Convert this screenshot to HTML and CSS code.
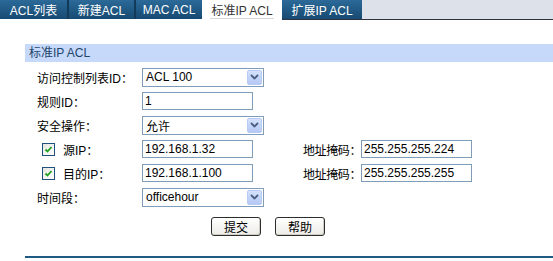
FILE: index.html
```html
<!DOCTYPE html>
<html lang="zh-CN">
<head>
  <meta charset="UTF-8">
  <title>标准IP ACL</title>
  <link rel="stylesheet" href="styles.css">
</head>
<body>
<div class="tabs">
  <a class="tab t1">ACL列表</a>
  <a class="tab t2">新建ACL</a>
  <a class="tab t3">MAC ACL</a>
  <a class="tab active"><span>标准IP ACL</span></a>
  <a class="tab t5">扩展IP ACL</a>
  <div class="tabs-rest"></div>
</div>

<div class="panel">
  <div class="panel-title">标准IP ACL</div>
  <div class="form">
    <div class="row">
      <label class="lbl">访问控制列表ID：</label>
      <div class="cell">
        <div class="select"><span>ACL 100</span><i class="drop"><svg width="9" height="6" viewBox="0 0 9 6"><path d="M1 1 L4.5 4.5 L8 1" fill="none" stroke="#4a5f86" stroke-width="1.8"/></svg></i></div>
      </div>
    </div>
    <div class="row">
      <label class="lbl">规则ID：</label>
      <div class="cell"><div class="input">1</div></div>
    </div>
    <div class="row">
      <label class="lbl">安全操作：</label>
      <div class="cell">
        <div class="select"><span>允许</span><i class="drop"><svg width="9" height="6" viewBox="0 0 9 6"><path d="M1 1 L4.5 4.5 L8 1" fill="none" stroke="#4a5f86" stroke-width="1.8"/></svg></i></div>
      </div>
    </div>
    <div class="row">
      <label class="lbl chk-lbl">
        <i class="chk"><svg width="11" height="11" viewBox="0 0 11 11"><path d="M2.5 5.5 L4.5 7.5 L8.5 3" fill="none" stroke="#21a121" stroke-width="1.8"/></svg></i>源IP：
      </label>
      <div class="cell"><div class="input">192.168.1.32</div></div>
      <label class="lbl2">地址掩码：</label>
      <div class="input">255.255.255.224</div>
    </div>
    <div class="row">
      <label class="lbl chk-lbl">
        <i class="chk"><svg width="11" height="11" viewBox="0 0 11 11"><path d="M2.5 5.5 L4.5 7.5 L8.5 3" fill="none" stroke="#21a121" stroke-width="1.8"/></svg></i>目的IP：
      </label>
      <div class="cell"><div class="input">192.168.1.100</div></div>
      <label class="lbl2">地址掩码：</label>
      <div class="input">255.255.255.255</div>
    </div>
    <div class="row">
      <label class="lbl">时间段：</label>
      <div class="cell">
        <div class="select"><span>officehour</span><i class="drop"><svg width="9" height="6" viewBox="0 0 9 6"><path d="M1 1 L4.5 4.5 L8 1" fill="none" stroke="#4a5f86" stroke-width="1.8"/></svg></i></div>
      </div>
    </div>
  </div>
  <div class="buttons">
    <button class="btn">提交</button>
    <button class="btn">帮助</button>
  </div>
  <div class="bottom-line"></div>
</div>
</body>
</html>
```

FILE: styles.css
```css
* {
  margin: 0;
  padding: 0;
  box-sizing: border-box;
}
body {
  background-color: #fff;
  font-family: "Liberation Sans", "Noto Sans CJK SC", sans-serif;
  font-size: 12px;
  color: #000;
}

/* 顶部标签 */
.tabs {
  display: flex;
  height: 20px;
}
.tab {
  display: flex;
  align-items: center;
  justify-content: center;
  height: 19px;
  color: #fff;
  background: linear-gradient(#2c6a99, #164a72);
  border-right: 2px solid #123a5a;
}
.t1 { width: 69px; }
.t2 { width: 67px; }
.t3 { width: 66px; border-right: 0; }
.tab.active {
  width: 80px;
  color: #333;
  background: #fff;
  border-right: 0;
}
.tab.active span {
  border-bottom: 1px solid #d8d8d8;
  padding: 1px 1px 0;
}
.t5 {
  width: 80px;
  height: 20px;
  border-right: 0;
  border-bottom: 1px solid #2d3440;
}
.tabs-rest {
  flex: 1;
  height: 20px;
  background: #dde1ea;
  border-bottom: 1px solid #2d3440;
}

/* 内容 */
.panel {
  margin: 24px 0 0 25px;
}
.panel-title {
  height: 18px;
  line-height: 18px;
  padding-left: 4px;
  background: #c6d9fb;
  color: #23456a;
}
.form {
  padding-top: 3px;
}
.row {
  display: flex;
  align-items: center;
  height: 24px;
}
.row > * {
  flex-shrink: 0;
  white-space: nowrap;
}
.lbl {
  width: 117px;
  padding-left: 12px;
}
.chk-lbl {
  display: flex;
  align-items: center;
  padding-left: 17px;
}
.chk {
  display: flex;
  align-items: center;
  justify-content: center;
  width: 13px;
  height: 13px;
  margin-right: 8px;
  border: 1px solid #1c5180;
  background: linear-gradient(135deg, #e6e6e0, #fff);
}
.cell {
  width: 161px;
}
.lbl2 {
  width: 58px;
  letter-spacing: -0.4px;
}
.input {
  width: 111px;
  height: 18px;
  line-height: 16px;
  padding-left: 2px;
  border: 1px solid #7f9db9;
  background: #fff;
}
.select {
  display: flex;
  align-items: center;
  justify-content: space-between;
  width: 122px;
  height: 19px;
  padding: 0 1px 0 3px;
  border: 1px solid #7f9db9;
  background: #fff;
}
.drop {
  display: flex;
  align-items: center;
  justify-content: center;
  width: 15px;
  height: 15px;
  border: 1px solid #b9cbf3;
  border-radius: 2px;
  background: linear-gradient(#d6e2fc, #b4c8f4);
}

/* 按钮 */
.buttons {
  display: flex;
  gap: 14px;
  margin: 8px 0 0 186px;
}
.btn {
  width: 50px;
  height: 19px;
  font-family: inherit;
  font-size: 12px;
  border: 1px solid #2c2c2c;
  border-radius: 3px;
  background: linear-gradient(#fff, #ecebe6);
  box-shadow: inset -1px -1px 0 #d0cec6;
}
.bottom-line {
  height: 2px;
  margin-top: 20px;
  background: #1f5a85;
}
```
